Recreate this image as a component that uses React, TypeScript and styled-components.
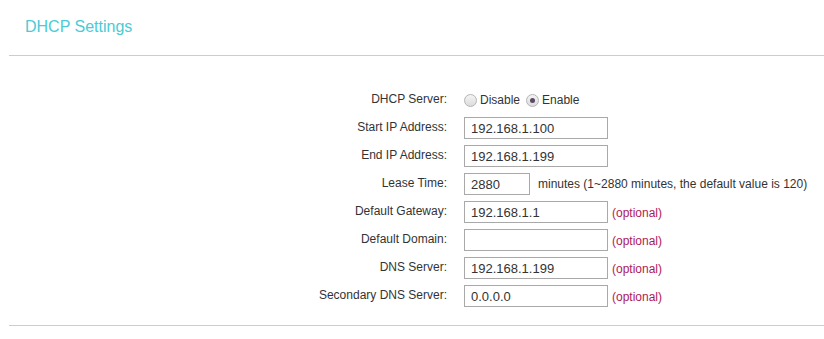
import styled, { createGlobalStyle } from "styled-components";

const GlobalStyle = createGlobalStyle`
  body {
    margin: 0;
    background: #fff;
    font-family: "Liberation Sans", Arial, sans-serif;
    color: #333;
  }
`;

const Wrapper = styled.div`
  width: 824px;
  height: 339px;
  overflow: hidden;
`;

const Header = styled.div`
  height: 55px;
  padding-left: 25px;
  box-sizing: border-box;
  padding-top: 17px;
`;

const Title = styled.h2`
  margin: 0;
  font-size: 16px;
  font-weight: normal;
  color: #4acbd6;
  line-height: 20px;
`;

const Divider = styled.hr`
  margin: 0 0 0 9px;
  border: none;
  border-top: 1px solid #cccccc;
  height: 0;
`;

const Form = styled.div`
  display: flex;
  flex-direction: column;
  gap: 6px;
  padding: 33px 0 18px;
`;

const Row = styled.div`
  display: flex;
  align-items: center;
  height: 22px;
`;

const Label = styled.div`
  width: 447px;
  text-align: right;
  font-size: 12px;
  margin-right: 17px;
  margin-top: -3px;
  white-space: nowrap;
`;

const Input = styled.input<{ $w?: number }>`
  box-sizing: border-box;
  width: ${(p) => p.$w ?? 144}px;
  height: 22px;
  border: 1px solid #a9a9a9;
  padding: 0 6px;
  margin: 0;
  font-family: "Liberation Sans", Arial, sans-serif;
  font-size: 13px;
  color: #333;
  outline: none;
`;

const Hint = styled.span<{ $optional?: boolean }>`
  font-size: 12px;
  margin-left: ${(p) => (p.$optional ? 4 : 8)}px;
  color: ${(p) => (p.$optional ? "#b0185a" : "#333")};
  margin-top: ${(p) => (p.$optional ? 2 : 0)}px;
  white-space: nowrap;
`;

const RadioGroup = styled.div`
  display: flex;
  align-items: center;
  font-size: 12px;
`;

const RadioItem = styled.label`
  display: flex;
  align-items: center;
  gap: 3px;
  margin-right: 6px;
`;

const Radio = styled.span<{ $checked?: boolean }>`
  width: 11px;
  height: 11px;
  border-radius: 50%;
  border: 1px solid #b4b4b4;
  background: linear-gradient(#f4f4f4, #dcdcdc);
  display: flex;
  align-items: center;
  justify-content: center;
  &::after {
    content: "";
    width: 5px;
    height: 5px;
    border-radius: 50%;
    background: #5b4a63;
    display: ${(p) => (p.$checked ? "block" : "none")};
  }
`;

const fields = [
  { label: "Start IP Address:", value: "192.168.1.100" },
  { label: "End IP Address:", value: "192.168.1.199" },
  { label: "Lease Time:", value: "2880", width: 66, hint: "minutes (1~2880 minutes, the default value is 120)" },
  { label: "Default Gateway:", value: "192.168.1.1", optional: true },
  { label: "Default Domain:", value: "", optional: true },
  { label: "DNS Server:", value: "192.168.1.199", optional: true },
  { label: "Secondary DNS Server:", value: "0.0.0.0", optional: true },
];

function App() {
  return (
    <Wrapper>
      <GlobalStyle />
      <Header>
        <Title>DHCP Settings</Title>
      </Header>
      <Divider />
      <Form>
        <Row>
          <Label>DHCP Server:</Label>
          <RadioGroup>
            <RadioItem>
              <Radio />
              Disable
            </RadioItem>
            <RadioItem>
              <Radio $checked />
              Enable
            </RadioItem>
          </RadioGroup>
        </Row>
        {fields.map((f) => (
          <Row key={f.label}>
            <Label>{f.label}</Label>
            <Input $w={f.width} defaultValue={f.value} />
            {f.hint && <Hint>{f.hint}</Hint>}
            {f.optional && <Hint $optional>(optional)</Hint>}
          </Row>
        ))}
      </Form>
      <Divider />
    </Wrapper>
  );
}

export default App;
